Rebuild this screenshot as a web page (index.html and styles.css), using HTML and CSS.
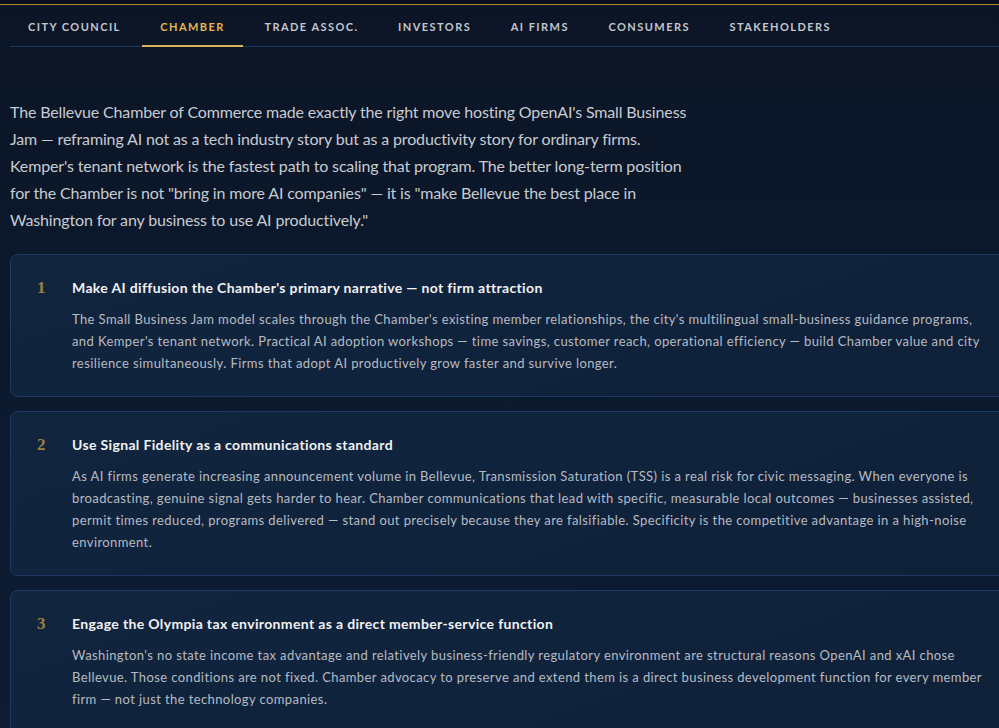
FILE: index.html
```html
<!DOCTYPE html>
<html>
<head>
    <meta charset="UTF-8">
    <meta name="viewport" content="width=device-width, initial-scale=1.0">
    <title>Chamber</title>
    <link rel="stylesheet" href="styles.css">
</head>
<body>
    <div class="top-strip"></div>
    <div class="page">
        <nav class="tabs">
            <a class="tab">City Council</a>
            <a class="tab active">Chamber</a>
            <a class="tab">Trade Assoc.</a>
            <a class="tab">Investors</a>
            <a class="tab">AI Firms</a>
            <a class="tab">Consumers</a>
            <a class="tab">Stakeholders</a>
        </nav>

        <p class="intro">The Bellevue Chamber of Commerce made exactly the right move hosting OpenAI's Small Business Jam — reframing AI not as a tech industry story but as a productivity story for ordinary firms. Kemper's tenant network is the fastest path to scaling that program. The better long-term position for the Chamber is not "bring in more AI companies" — it is "make Bellevue the best place in Washington for any business to use AI productively."</p>

        <div class="recs">
            <div class="rec">
                <div class="rec-num">1</div>
                <div class="rec-body">
                    <h3>Make AI diffusion the Chamber's primary narrative — not firm attraction</h3>
                    <p>The Small Business Jam model scales through the Chamber's existing member relationships, the city's multilingual small-business guidance programs, and Kemper's tenant network. Practical AI adoption workshops — time savings, customer reach, operational efficiency — build Chamber value and city resilience simultaneously. Firms that adopt AI productively grow faster and survive longer.</p>
                </div>
            </div>
            <div class="rec">
                <div class="rec-num">2</div>
                <div class="rec-body">
                    <h3>Use Signal Fidelity as a communications standard</h3>
                    <p>As AI firms generate increasing announcement volume in Bellevue, Transmission Saturation (TSS) is a real risk for civic messaging. When everyone is broadcasting, genuine signal gets harder to hear. Chamber communications that lead with specific, measurable local outcomes — businesses assisted, permit times reduced, programs delivered — stand out precisely because they are falsifiable. Specificity is the competitive advantage in a high-noise environment.</p>
                </div>
            </div>
            <div class="rec">
                <div class="rec-num">3</div>
                <div class="rec-body">
                    <h3>Engage the Olympia tax environment as a direct member-service function</h3>
                    <p>Washington's no state income tax advantage and relatively business-friendly regulatory environment are structural reasons OpenAI and xAI chose Bellevue. Those conditions are not fixed. Chamber advocacy to preserve and extend them is a direct business development function for every member firm — not just the technology companies.</p>
                </div>
            </div>
        </div>
    </div>
</body>
</html>
```

FILE: styles.css
```css
html, body {
    overflow: hidden;
}
body {
    margin: 0;
    padding: 0;
    background: linear-gradient(180deg, #0b1526 0%, #0c1a2f 60%, #0d1c33 100%);
    font-family: Lato, "Open Sans", sans-serif;
    color: #c9ccd1;
    min-height: 728px;
}
.top-strip {
    height: 4px;
    background-color: #080f1c;
    border-bottom: 1px solid #b48a2c;
}
.page {
    width: 1000px;
    padding-left: 10px;
}
.tabs {
    display: flex;
    gap: 3.5px;
    border-bottom: 1px solid #1c3a68;
}
.tab {
    display: block;
    padding: 15px 18px 12px;
    font-size: 11px;
    font-weight: 700;
    letter-spacing: 1.45px;
    text-transform: uppercase;
    color: #c3c6cc;
    border-bottom: 2px solid transparent;
    margin-bottom: -1px;
    cursor: pointer;
}
.tab.active {
    color: #e2b74c;
    border-bottom-color: #d9b35a;
}
.intro {
    margin: 51px 0 21px;
    max-width: 686px;
    font-size: 16px;
    letter-spacing: -0.15px;
    line-height: 27px;
    color: #c8cbd0;
}
.recs {
    display: flex;
    flex-direction: column;
    gap: 14px;
}
.rec {
    display: flex;
    padding: 23px 24px 22px 26px;
    background: linear-gradient(160deg, #11253f 0%, #0f2139 100%);
    border: 1px solid #1f3a62;
    border-radius: 8px;
}
.rec-num {
    width: 35px;
    flex-shrink: 0;
    font-family: "Liberation Serif", serif;
    font-size: 17px;
    font-weight: 700;
    color: #9c803f;
    line-height: 20px;
}
.rec-body {
    max-width: 915px;
}
.rec-body h3 {
    margin: 0 0 11px;
    font-size: 14px;
    letter-spacing: 0.35px;
    line-height: 20px;
    font-weight: 700;
    color: #f1f2f4;
}
.rec-body p {
    margin: 0;
    font-size: 13px;
    letter-spacing: 0.4px;
    line-height: 21.75px;
    color: #b7bbc2;
}
```
